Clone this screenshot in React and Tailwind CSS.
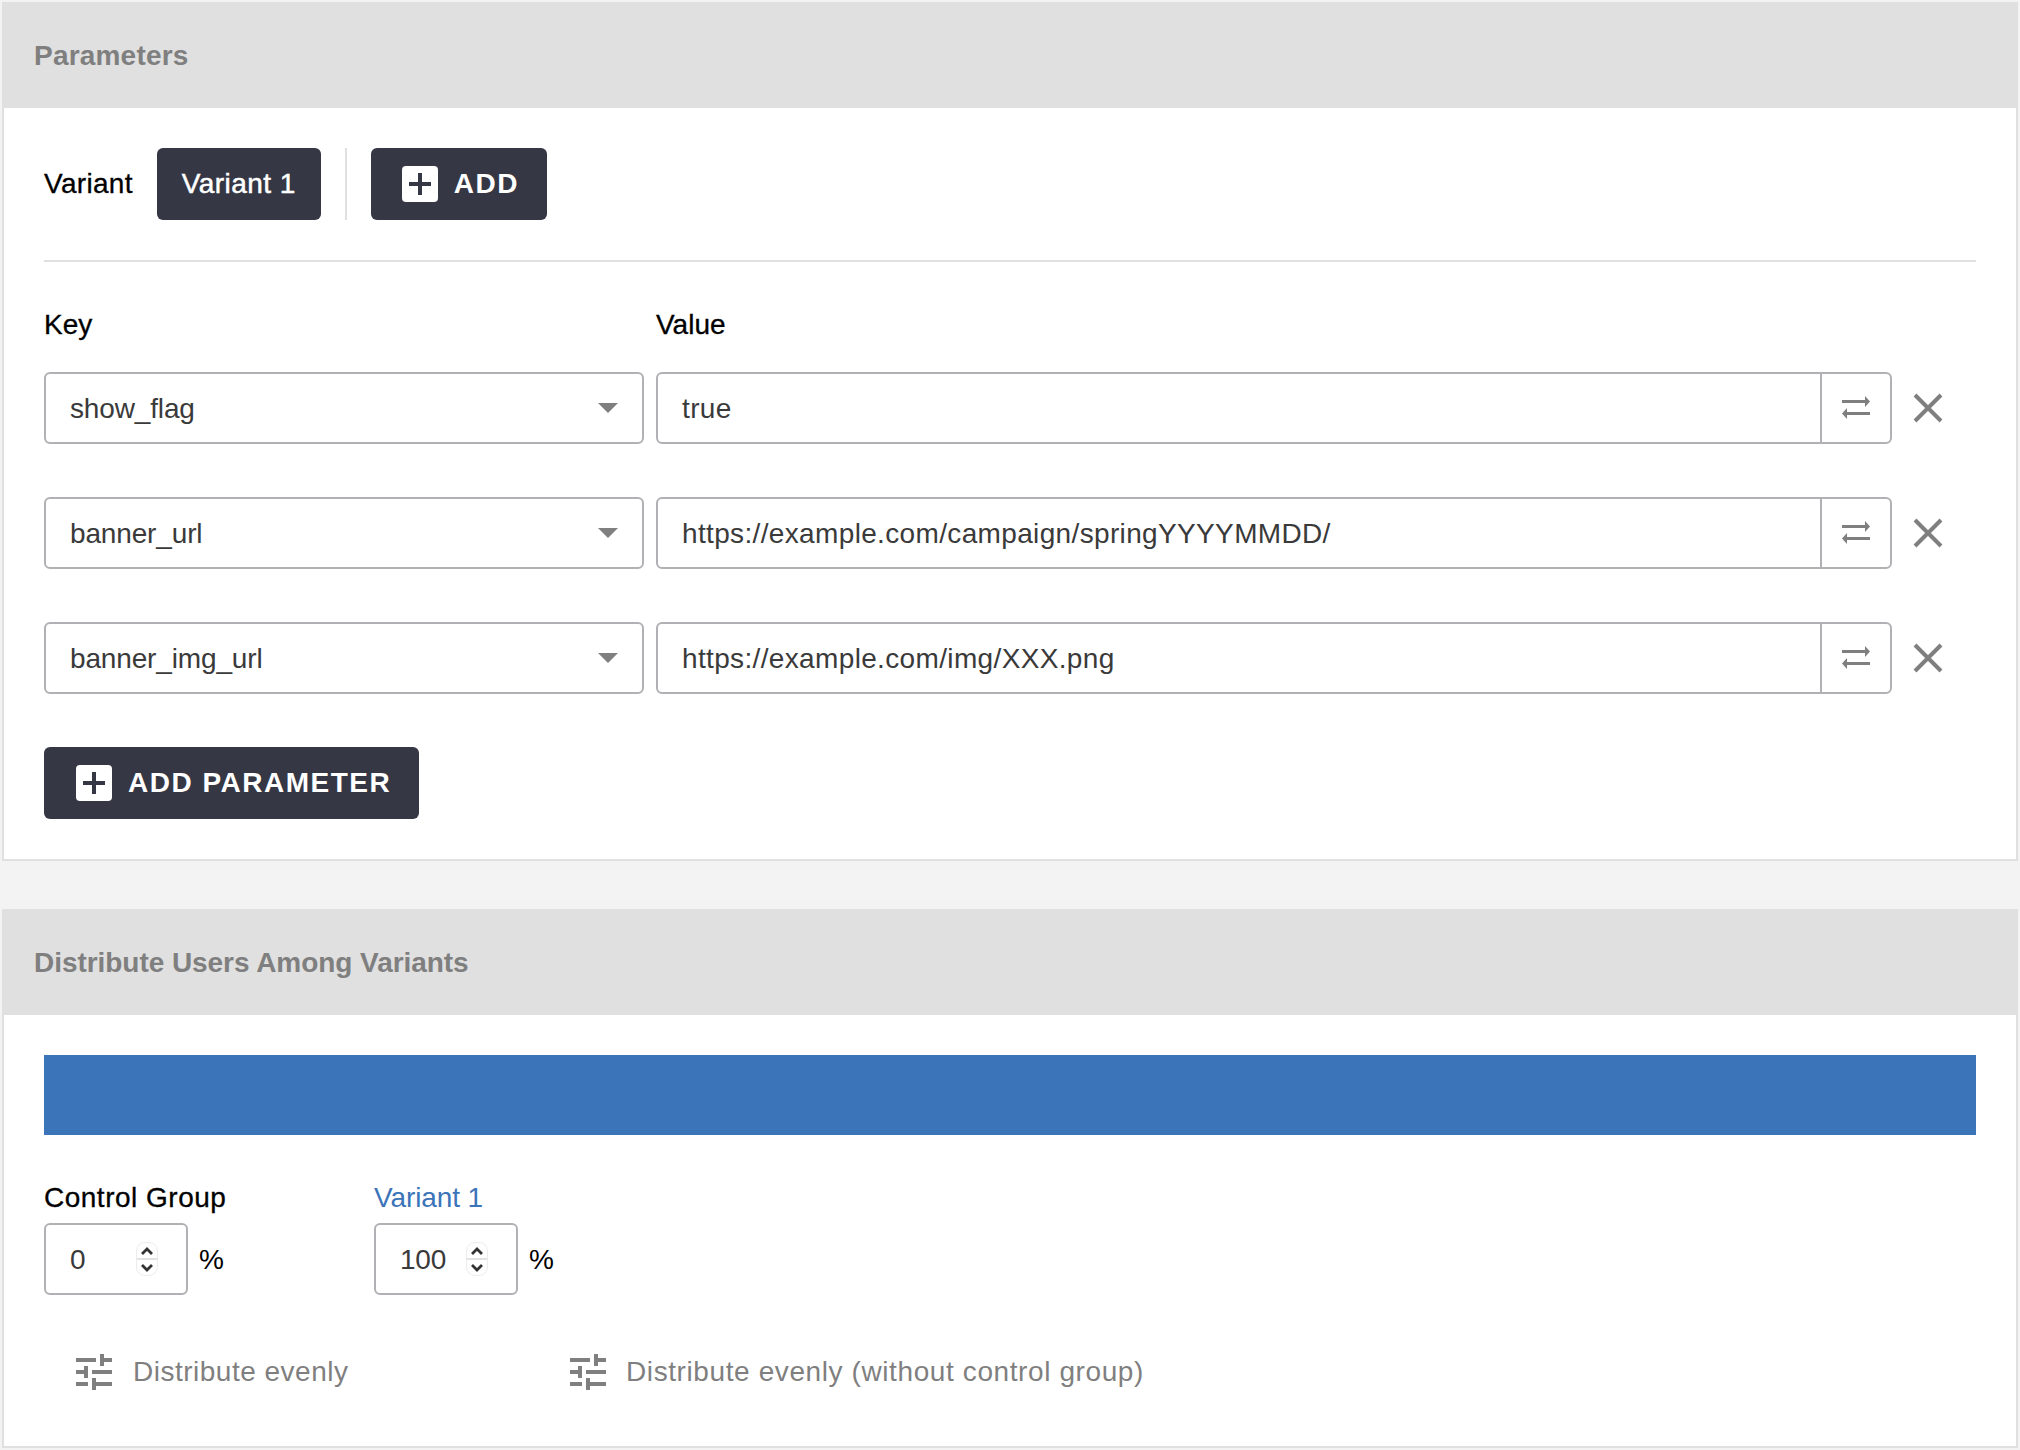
import React from "react";
import { MdTune } from "react-icons/md";

const rows = [
  { key: "show_flag", value: "true" },
  { key: "banner_url", value: "https://example.com/campaign/springYYYYMMDD/" },
  { key: "banner_img_url", value: "https://example.com/img/XXX.png" },
];

const PlusBox = () => (
  <span className="flex h-9 w-9 items-center justify-center rounded-[4px] bg-white">
    <svg width="22" height="22" viewBox="0 0 22 22">
      <rect x="0" y="9" width="22" height="4" fill="#353744" />
      <rect x="9" y="0" width="4" height="22" fill="#353744" />
    </svg>
  </span>
);

const SwapIcon = () => (
  <svg width="30" height="24" viewBox="0 0 30 24" fill="#7f7f7f">
    <rect x="1" y="4" width="25" height="3" />
    <path d="M24 0l5 5.500-5 5.500z" />
    <rect x="3" y="16" width="26" height="3" />
    <path d="M6 12l-5 5.500 5 5.500z" />
  </svg>
);

const CloseIcon = () => (
  <svg width="30" height="30" viewBox="0 0 30 30" stroke="#7f7f7f" strokeWidth="4">
    <path d="M2 2l26 26M28 2L2 28" />
  </svg>
);

const Caret = () => (
  <svg width="20" height="10" viewBox="0 0 20 10" fill="#7f7f7f">
    <path d="M0 0h20l-10 10z" />
  </svg>
);

const Spinner = () => (
  <span className="flex h-[34px] w-[22px] flex-col rounded-[9px] border border-[#ececec] bg-white">
    <span className="flex flex-1 items-center justify-center border-b-2 border-[#e2e2e2]">
      <svg width="12" height="8" viewBox="0 0 12 8" fill="none" stroke="#333" strokeWidth="2.800">
        <path d="M1 7l5-5 5 5" />
      </svg>
    </span>
    <span className="flex flex-1 items-center justify-center">
      <svg width="12" height="8" viewBox="0 0 12 8" fill="none" stroke="#333" strokeWidth="2.800">
        <path d="M1 1l5 5 5-5" />
      </svg>
    </span>
  </span>
);

const Percent = ({ label, value, labelClass }) => (
  <div className="w-[330px]">
    <div className={`h-[34px] text-[28px] leading-[34px] ${labelClass}`}>{label}</div>
    <div className="mt-2 flex items-center gap-[11px]">
      <div className="flex h-[72px] w-[144px] items-center justify-between rounded-[6px] border-2 border-[#b1b1b5] bg-white pl-[24px] pr-[28px] text-[#3a3a3a]">
        <span className="pt-[2px] tracking-[-0.2px]">{value}</span>
        <Spinner />
      </div>
      <span className="pt-[2px] text-black">%</span>
    </div>
  </div>
);

const App = () => {
  return (
    <div className="min-h-screen bg-[#f3f3f3] p-[2px] font-['Liberation_Sans',sans-serif] text-[28px]">
      <section className="border-2 border-[#e0e0e0] bg-white">
        <h2 className="flex h-[104px] items-center bg-[#e0e0e0] pl-[30px] text-[28px] font-bold tracking-[0.2px] text-[#7f7f7f]">
          Parameters
        </h2>
        <div className="px-[40px] pb-[40px] pt-[40px]">
          <div className="flex items-center border-b-2 border-[#e0e0e0] pb-[40px]">
            <span className="tracking-[0.3px] text-black [-webkit-text-stroke:0.3px_black]">Variant</span>
            <button className="ml-[24px] h-[72px] w-[164px] rounded-[6px] bg-[#353744] tracking-[0.45px] text-white [-webkit-text-stroke:0.5px_white]">
              Variant 1
            </button>
            <div className="mx-[24px] h-[72px] w-[2px] bg-[#e0e0e0]" />
            <button className="flex h-[72px] w-[176px] items-center gap-[16px] rounded-[6px] bg-[#353744] pl-[31px] font-bold tracking-[1.500px] text-white">
              <PlusBox />
              ADD
            </button>
          </div>

          <div className="mt-[46px] flex gap-[12px] text-black [-webkit-text-stroke:0.3px_black]">
            <div className="h-[34px] w-[600px] leading-[34px]">Key</div>
            <div className="h-[34px] leading-[34px]">Value</div>
          </div>

          <div className="mt-[30px] flex flex-col gap-[53px]">
            {rows.map((row) => (
              <div key={row.key} className="flex h-[72px] gap-[12px] text-[#3a3a3a]">
                <div className="flex w-[600px] items-center justify-between rounded-[6px] border-2 border-[#b1b1b5] pl-[24px] pr-[24px]">
                  <span className="pt-[2px] tracking-[-0.15px]">{row.key}</span>
                  <Caret />
                </div>
                <div className="flex flex-1 rounded-[6px] border-2 border-[#b1b1b5]">
                  <div className="flex flex-1 items-center pl-[24px] pt-[2px] tracking-[0.35px]">{row.value}</div>
                  <div className="flex w-[70px] items-center justify-center border-l-2 border-[#b1b1b5]">
                    <SwapIcon />
                  </div>
                </div>
                <div className="flex w-[72px] items-center pl-[9px]">
                  <CloseIcon />
                </div>
              </div>
            ))}
          </div>

          <button className="mt-[53px] flex h-[72px] w-[375px] items-center gap-[16px] rounded-[6px] bg-[#353744] pl-[32px] font-bold tracking-[1.500px] text-white">
            <PlusBox />
            ADD PARAMETER
          </button>
        </div>
      </section>

      <section className="mt-[48px] border-2 border-[#e0e0e0] bg-white">
        <h2 className="flex h-[104px] items-center bg-[#e0e0e0] pl-[30px] text-[28px] font-bold tracking-[-0.05px] text-[#7f7f7f]">
          Distribute Users Among Variants
        </h2>
        <div className="px-[40px] pb-[50px] pt-[40px]">
          <div className="h-[80px] bg-[#3b74b8]" />
          <div className="mt-[46px] flex">
            <Percent label="Control Group" value="0" labelClass="tracking-[0.5px] text-black [-webkit-text-stroke:0.3px_black]" />
            <Percent label="Variant 1" value="100" labelClass="tracking-[-0.1px] text-[#3b74b8]" />
          </div>
          <div className="mt-[53px] flex h-[48px] items-center text-[#7f7f7f]">
            <div className="flex w-[520px] items-center gap-[15px] pl-[26px] tracking-[0.5px]">
              <MdTune size={48} />
              Distribute evenly
            </div>
            <div className="flex items-center gap-[14px] tracking-[0.6px]">
              <MdTune size={48} />
              Distribute evenly (without control group)
            </div>
          </div>
        </div>
      </section>
    </div>
  );
};

export default App;
